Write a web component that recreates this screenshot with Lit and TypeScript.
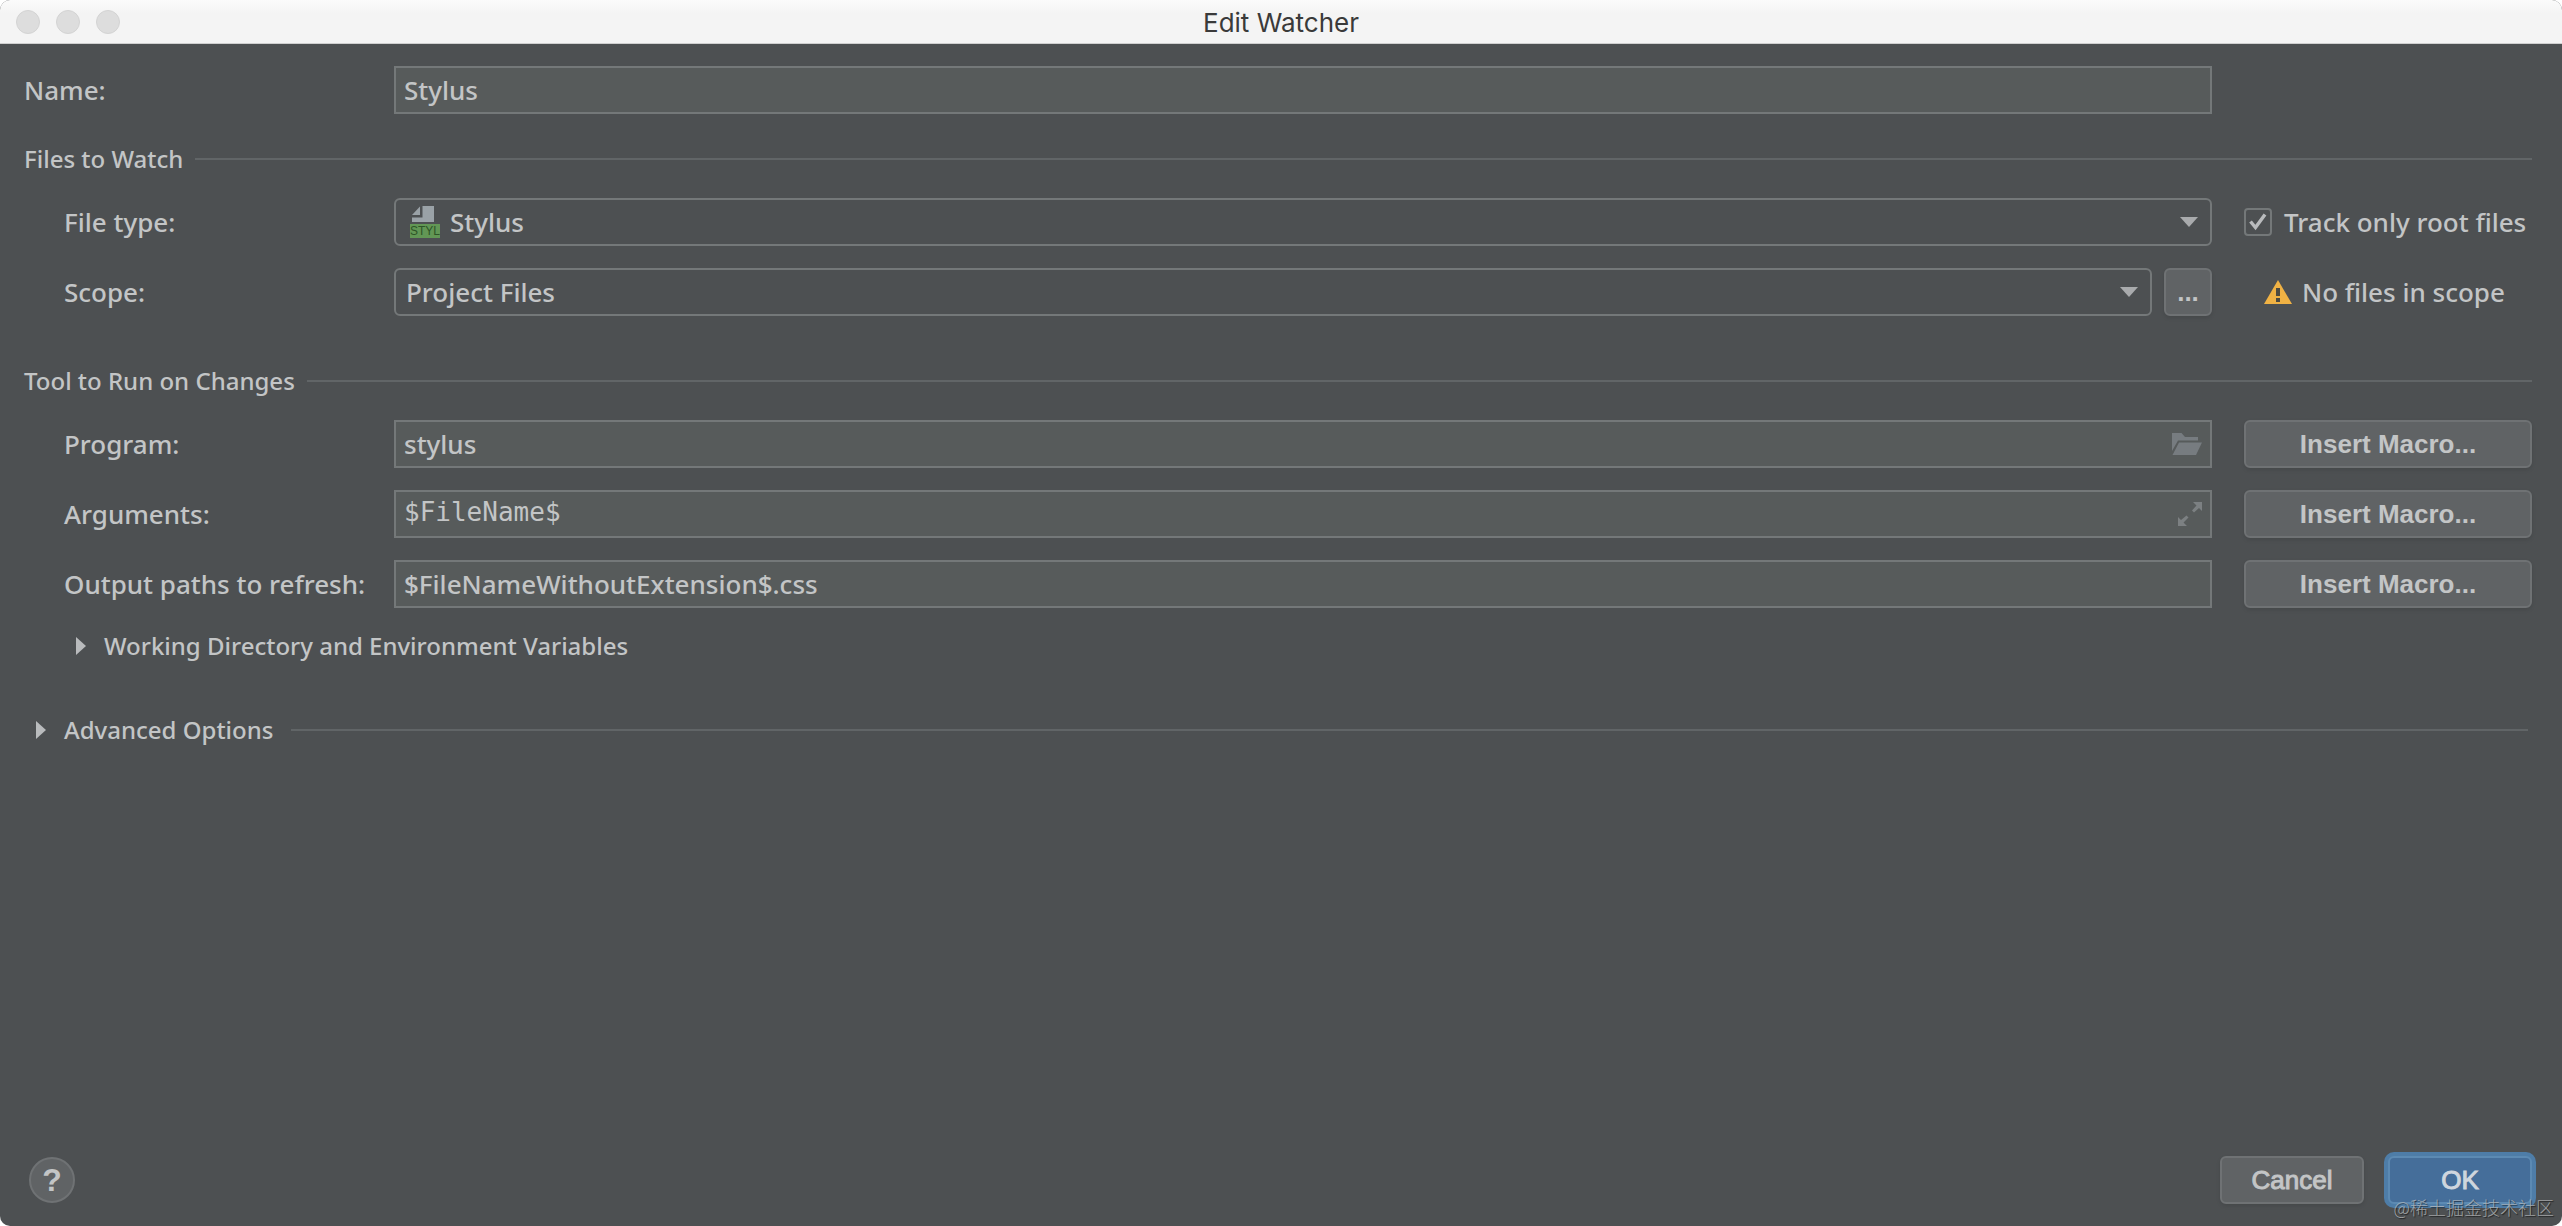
import { LitElement, html, css, svg } from "lit";
import { customElement, state } from "lit/decorators.js";

const caret = svg`<path d="M0 0h18l-9 10z" fill="#a9abad"/>`;

@customElement("app-root")
export class AppRoot extends LitElement {
  @state() private trackRoot = true;

  static styles = css`
    :host {
      display: block;
      background: #fff;
      --bg: #4d5052;
      --field: #575b5b;
      --line: #747879;
      --rule: #616567;
      --text: #c3c5c6;
      font: 500 26px/32px "Noto Sans", "Open Sans", sans-serif;
      color: var(--text);
    }
    * { box-sizing: border-box; }
    input, select, button { font: inherit; color: inherit; margin: 0; }

    .dialog {
      position: relative;
      display: flex;
      flex-direction: column;
      min-height: 100vh;
      background: var(--bg);
      border-radius: 10px;
      overflow: hidden;
    }
    .titlebar {
      display: grid;
      grid-template-columns: 1fr auto 1fr;
      align-items: center;
      height: 44px;
      padding: 0 16px;
      background: linear-gradient(#fbfbfb, #f4f4f4 14px);
      border-bottom: 1px solid #cfcfcf;
    }
    .lights { display: flex; gap: 16px; }
    .light {
      width: 24px;
      height: 24px;
      border-radius: 50%;
      background: #dddddd;
      border: 1px solid #d3d3d3;
    }
    .title {
      margin: 0;
      padding-top: 2px;
      font: 400 26px/32px Inter, "Liberation Sans", sans-serif;
      color: #3a3a3a;
    }

    .form {
      flex: 1;
      padding: 22px 30px 0 24px;
    }
    .rows { display: grid; gap: 22px; }
    .row {
      display: grid;
      grid-template-columns: 338px minmax(0, 1fr) 288px;
      column-gap: 32px;
      align-items: center;
      min-height: 48px;
      white-space: nowrap;
    }
    .indent { padding-left: 40px; }

    .section {
      display: flex;
      align-items: center;
      gap: 12px;
      margin: 29px 0 23px;
      font-size: 24px;
      font-weight: inherit;
      line-height: 32px;
    }
    .section.spaced { margin-top: 49px; }
    .section::after {
      content: "";
      flex: 1;
      height: 2px;
      background: var(--rule);
    }

    .control {
      display: grid;
      grid-template-columns: minmax(0, 1fr) auto;
      align-items: center;
      height: 48px;
    }
    .control > * { grid-row: 1; }
    .text, .select {
      grid-column: 1 / 3;
      width: 100%;
      height: 48px;
      border: 2px solid var(--line);
      outline: none;
    }
    .text {
      padding: 0 8px;
      background: var(--field);
      border-radius: 0;
    }
    .mono {
      font-family: "DejaVu Sans Mono", monospace;
      padding-bottom: 4px;
    }
    .select {
      appearance: none;
      padding: 0 48px 0 10px;
      background: var(--bg);
      border-radius: 6px;
    }
    .select.with-icon { padding-left: 54px; }
    .lead {
      grid-column: 1;
      justify-self: start;
      margin-left: 16px;
      pointer-events: none;
    }
    .trail {
      grid-column: 2;
      margin-right: 10px;
      pointer-events: none;
    }
    .trail.caret { margin-right: 14px; }
    .with-button {
      display: grid;
      grid-template-columns: minmax(0, 1fr) 48px;
      gap: 12px;
    }
    svg { display: block; }
    .badge { font: 400 12px "Liberation Sans", sans-serif; }

    .button {
      height: 48px;
      padding: 0;
      background: #606365;
      border: 2px solid #6f7274;
      border-radius: 6px;
      box-shadow: 0 2px 4px rgba(0, 0, 0, 0.1);
      font: 700 26px/32px "Liberation Sans", Arial, sans-serif;
      text-align: center;
    }
    .button.wide {
      width: 144px;
      font-weight: 400;
      -webkit-text-stroke: 1px currentColor;
    }
    .button.primary {
      color: #cfd6de;
      background: #456e9a;
      border-color: #5c8ab3;
      box-shadow: 0 0 0 4px #4e7da8;
    }

    .check {
      display: flex;
      align-items: center;
      gap: 12px;
    }
    .box {
      display: grid;
      flex: none;
    }
    .box > * { grid-area: 1 / 1; }
    .box input {
      appearance: none;
      width: 28px;
      height: 28px;
      border: 2px solid var(--line);
      border-radius: 4px;
      background: var(--bg);
    }
    .box svg { pointer-events: none; }
    .notice {
      display: flex;
      align-items: center;
      gap: 10px;
      padding-left: 20px;
    }

    .expander {
      display: flex;
      align-items: center;
      width: 100%;
      height: 32px;
      padding: 0;
      border: 0;
      background: none;
      font-size: 24px;
      line-height: 32px;
      text-align: left;
      white-space: nowrap;
    }
    .expander.nested { margin-top: 22px; padding-left: 52px; gap: 18px; }
    .expander.top { margin-top: 52px; padding: 0 4px 0 12px; gap: 18px; }
    .expander.top::after {
      content: "";
      flex: 1;
      height: 2px;
      background: var(--rule);
    }

    .footer {
      display: flex;
      align-items: center;
      justify-content: space-between;
      padding: 22px 30px 22px 29px;
    }
    .actions { display: flex; gap: 24px; }
    .help {
      width: 46px;
      height: 46px;
      padding: 0;
      border: 2px solid #6f7274;
      border-radius: 50%;
      background: #606365;
      font: 700 32px/40px "Liberation Sans", Arial, sans-serif;
    }
    .watermark {
      position: absolute;
      right: 8px;
      bottom: 6px;
      font: 300 18px/26px "Noto Sans CJK SC", sans-serif;
      color: rgba(190, 192, 194, 0.75);
      text-shadow: 1px 1px 1px rgba(0, 0, 0, 0.6);
      pointer-events: none;
    }
  `;

  private macroButton() {
    return html`<button class="button" type="button">Insert Macro...</button>`;
  }

  private arrow() {
    return html`<svg width="10" height="18" viewBox="0 0 10 18" aria-hidden="true"><path d="M0 0l10 9-10 9z" fill="#b9bbbd"/></svg>`;
  }

  private caretIcon() {
    return html`<svg class="trail caret" width="18" height="10" viewBox="0 0 18 10" aria-hidden="true">${caret}</svg>`;
  }

  render() {
    return html`
      <div class="dialog" role="dialog" aria-labelledby="title">
        <header class="titlebar">
          <div class="lights"><span class="light"></span><span class="light"></span><span class="light"></span></div>
          <h1 class="title" id="title">Edit Watcher</h1>
        </header>

        <main class="form">
          <div class="row">
            <label for="name">Name:</label>
            <div class="control"><input class="text" id="name" type="text" .value=${"Stylus"}></div>
          </div>

          <h2 class="section">Files to Watch</h2>
          <div class="rows">
            <div class="row">
              <label class="indent" for="type">File type:</label>
              <div class="control">
                <select class="select with-icon" id="type"><option>Stylus</option></select>
                <svg class="lead" width="30" height="32" viewBox="0 0 30 32" aria-hidden="true">
                  <path d="M2 9L10 0.5V9z" fill="#9aa2a7"/>
                  <path d="M12.500 0H24V16H2V11.500H12.500z" fill="#9aa2a7"/>
                  <rect y="18" width="30" height="14" fill="#629755"/>
                  <text class="badge" x="15" y="29" text-anchor="middle" fill="#2d5527">STYL</text>
                </svg>
                ${this.caretIcon()}
              </div>
              <label class="check">
                <span class="box">
                  <input type="checkbox" .checked=${this.trackRoot}
                    @change=${(e: Event) => (this.trackRoot = (e.target as HTMLInputElement).checked)}>
                  ${this.trackRoot
                    ? html`<svg width="28" height="28" viewBox="0 0 28 28" aria-hidden="true"><path d="M6.500 13.500L11.500 19.500L21 6.500" fill="none" stroke="#b9bbbd" stroke-width="3.400"/></svg>`
                    : null}
                </span>
                Track only root files
              </label>
            </div>
            <div class="row">
              <label class="indent" for="scope">Scope:</label>
              <div class="with-button">
                <div class="control">
                  <select class="select" id="scope"><option>Project Files</option></select>
                  ${this.caretIcon()}
                </div>
                <button class="button" type="button" aria-label="Choose scope">...</button>
              </div>
              <div class="notice">
                <svg width="28" height="24" viewBox="0 0 28 24" aria-hidden="true">
                  <path d="M14 0L28 24H0z" fill="#f0b244"/>
                  <path d="M12 8h4v8h-4zM12 18h4v4h-4z" fill="#4d4a40"/>
                </svg>
                No files in scope
              </div>
            </div>
          </div>

          <h2 class="section spaced">Tool to Run on Changes</h2>
          <div class="rows">
            <div class="row">
              <label class="indent" for="program">Program:</label>
              <div class="control">
                <input class="text" id="program" type="text" .value=${"stylus"}>
                <svg class="trail" width="30" height="22" viewBox="0 0 30 22" aria-hidden="true">
                  <path d="M0 0H9.500L13 4H26V7.500H6L0 18z" fill="#777c80"/>
                  <path d="M7 9.500H30L24 22H0.500z" fill="#777c80"/>
                </svg>
              </div>
              ${this.macroButton()}
            </div>
            <div class="row">
              <label class="indent" for="arguments">Arguments:</label>
              <div class="control">
                <input class="text mono" id="arguments" type="text" .value=${"$FileName$"}>
                <svg class="trail" width="24" height="24" viewBox="0 0 24 24" aria-hidden="true">
                  <path d="M15 0H24V9L21 6L16 10.500L14 8.500L18.500 3.500z" fill="#7c8082"/>
                  <path d="M9 24H0V15L3 18L8.500 13.500L10.500 15.500L5.500 20.500z" fill="#7c8082"/>
                </svg>
              </div>
              ${this.macroButton()}
            </div>
            <div class="row">
              <label class="indent" for="output">Output paths to refresh:</label>
              <div class="control"><input class="text" id="output" type="text" .value=${"$FileNameWithoutExtension$.css"}></div>
              ${this.macroButton()}
            </div>
          </div>

          <button class="expander nested" type="button" aria-expanded="false">${this.arrow()}Working Directory and Environment Variables</button>
          <button class="expander top" type="button" aria-expanded="false">${this.arrow()}Advanced Options</button>
        </main>

        <footer class="footer">
          <button class="help" type="button" aria-label="Help">?</button>
          <div class="actions">
            <button class="button wide" type="button">Cancel</button>
            <button class="button wide primary" type="submit">OK</button>
          </div>
        </footer>
        <div class="watermark">@稀土掘金技术社区</div>
      </div>
    `;
  }
}
